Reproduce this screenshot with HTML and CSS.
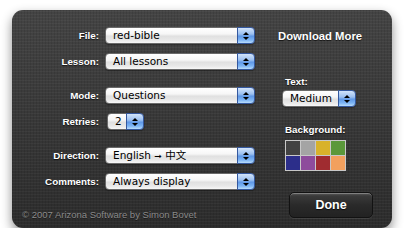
FILE: index.html
```html
<!DOCTYPE html>
<html lang="en">
<head>
    <meta charset="UTF-8">
    <title>Flashcards Preferences</title>
    <link rel="stylesheet" href="styles.css">
</head>
<body>

<div class="panel">
    <div class="left">
        <div class="group">
            <div class="row">
                <span class="lbl">File:</span>
                <div class="select wide"><span class="val">red-bible</span><span class="arrows"></span></div>
            </div>
            <div class="row">
                <span class="lbl">Lesson:</span>
                <div class="select wide"><span class="val">All lessons</span><span class="arrows"></span></div>
            </div>
        </div>
        <div class="group">
            <div class="row">
                <span class="lbl">Mode:</span>
                <div class="select wide"><span class="val">Questions</span><span class="arrows"></span></div>
            </div>
            <div class="row">
                <span class="lbl">Retries:</span>
                <div class="select small"><span class="val">2</span><span class="arrows"></span></div>
            </div>
        </div>
        <div class="group">
            <div class="row">
                <span class="lbl">Direction:</span>
                <div class="select wide"><span class="val">English <span class="arrow-glyph">➞</span> 中文</span><span class="arrows"></span></div>
            </div>
            <div class="row">
                <span class="lbl">Comments:</span>
                <div class="select wide"><span class="val">Always display</span><span class="arrows"></span></div>
            </div>
        </div>
        <p class="copy">© 2007 Arizona Software by Simon Bovet</p>
    </div>

    <div class="right">
        <div class="download">Download More</div>
        <div class="side-label text-label">Text:</div>
        <div class="select medium"><span class="val">Medium</span><span class="arrows"></span></div>
        <div class="side-label bg-label">Background:</div>
        <div class="swatches">
            <span class="sw c1"></span>
            <span class="sw c2"></span>
            <span class="sw c3"></span>
            <span class="sw c4"></span>
            <span class="sw c5"></span>
            <span class="sw c6"></span>
            <span class="sw c7"></span>
            <span class="sw c8"></span>
        </div>
        <button class="done">Done</button>
    </div>
</div>

</body>
</html>
```

FILE: styles.css
```css
body {
    margin: 0;
    background-color: #ffffff;
    font-family: "Liberation Sans", Arial, sans-serif;
}
.panel {
    margin: 10px 0 0 12px;
    width: 380px;
    height: 218px;
    box-sizing: border-box;
    border-radius: 11px;
    display: flex;
    background-color: #363636;
    background-image:
        repeating-linear-gradient(0deg, rgba(255, 255, 255, 0.035) 0 1px, transparent 1px 3px),
        repeating-linear-gradient(90deg, rgba(0, 0, 0, 0.09) 0 1px, transparent 1px 3px),
        linear-gradient(#444444, #2c2c2c);
    box-shadow: 0 5px 11px rgba(0, 0, 0, 0.45);
}
.left {
    width: 266px;
    padding-top: 17px;
    display: flex;
    flex-direction: column;
}
.group {
    display: flex;
    flex-direction: column;
    gap: 9px;
}
.group + .group {
    margin-top: 17px;
}
.row {
    display: flex;
    align-items: center;
    height: 17px;
}
.lbl {
    width: 87px;
    margin-right: 6px;
    text-align: right;
    color: #ffffff;
    font-weight: bold;
    font-size: 9.8px;
    text-shadow: 0 1px 1px rgba(0, 0, 0, 0.7);
}

/* aqua popup menus */
.select {
    display: flex;
    height: 17px;
    box-sizing: border-box;
    border: 1px solid #6a6a6a;
    border-radius: 4px;
    background: linear-gradient(#ffffff 0%, #f6f6f6 40%, #e0e0e0 55%, #e8e8e8 80%, #f7f7f7 100%);
    box-shadow: 0 1px 1px rgba(0, 0, 0, 0.35);
}
.select.wide {
    width: 150px;
}
.select.small {
    width: 37px;
    margin-left: 2px;
}
.select.medium {
    width: 74px;
    margin: 2px 0 0 4px;
}
.val {
    flex: 1;
    padding-left: 7px;
    font-family: "DejaVu Sans", "Noto Sans CJK SC", sans-serif;
    font-size: 10.5px;
    line-height: 15px;
    color: #000000;
    white-space: nowrap;
    overflow: hidden;
}
.arrow-glyph {
    font-size: 9px;
}
.arrows {
    position: relative;
    width: 16px;
    margin: -1px -1px -1px 0;
    border: 1px solid #34589e;
    border-radius: 0 4px 4px 0;
    background: linear-gradient(#d2e4fb 0%, #9cc0f0 40%, #5f98e6 55%, #7cb4f4 80%, #b8dcfc 100%);
}
.arrows::before,
.arrows::after {
    content: '';
    position: absolute;
    left: 5px;
    border-left: 3px solid transparent;
    border-right: 3px solid transparent;
}
.arrows::before {
    top: 4px;
    border-bottom: 3px solid #000000;
}
.arrows::after {
    top: 9px;
    border-top: 3px solid #000000;
}

.copy {
    margin: auto 0 7px 10px;
    font-size: 9.5px;
    line-height: 12px;
    color: #8a8a8a;
    text-shadow: 0 1px 0 rgba(0, 0, 0, 0.5);
}

.right {
    flex: 1;
    padding-top: 19px;
    display: flex;
    flex-direction: column;
    align-items: flex-start;
}
.download {
    color: #ffffff;
    font-weight: bold;
    font-size: 11.3px;
    line-height: 14px;
    text-shadow: 0 1px 1px rgba(0, 0, 0, 0.7);
}
.side-label {
    margin-left: 7px;
    color: #ffffff;
    font-weight: bold;
    font-size: 9.8px;
    line-height: 12px;
    text-shadow: 0 1px 1px rgba(0, 0, 0, 0.7);
}
.text-label {
    margin-top: 33px;
}
.bg-label {
    margin-top: 17px;
}
.swatches {
    margin: 4px 0 0 7px;
    display: grid;
    grid-template-columns: repeat(4, 14px);
    grid-auto-rows: 14px;
    gap: 1px;
    padding: 1px;
    background-color: #c8c8c8;
}
.c1 { background-color: #424242; }
.c2 { background-color: #a4a4a4; }
.c3 { background-color: #d8b22a; }
.c4 { background-color: #5a983a; }
.c5 { background-color: #2c2e8a; }
.c6 { background-color: #8e4c9c; }
.c7 { background-color: #a02c30; }
.c8 { background-color: #f2a05e; }

.done {
    margin: 21px 0 0 11px;
    width: 84px;
    height: 26px;
    padding: 0;
    border: 1px solid #121212;
    border-radius: 5px;
    background: linear-gradient(#5c5c5c 0%, #3a3a3a 12%, #2a2a2a 50%, #222222 100%);
    box-shadow: inset 0 1px 0 rgba(255, 255, 255, 0.25), 0 1px 0 rgba(255, 255, 255, 0.08);
    color: #ffffff;
    font-family: "Liberation Sans", Arial, sans-serif;
    font-weight: bold;
    font-size: 12.5px;
    text-shadow: 0 1px 1px rgba(0, 0, 0, 0.8);
}
```
